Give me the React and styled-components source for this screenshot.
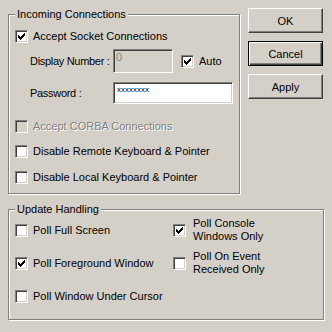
import React from 'react';
import styled, { createGlobalStyle } from 'styled-components';

const Global = createGlobalStyle`
  body {
    margin: 0;
    background: #d4d0c8;
    font-family: "Liberation Sans", Arial, sans-serif;
    font-size: 11px;
    color: #000;
  }
`;

const Dialog = styled.div`
  width: 332px;
  height: 332px;
  box-sizing: border-box;
  padding: 8px 0 0 8px;
  background: #d4d0c8;
`;

const TopRow = styled.div`
  display: flex;
  align-items: flex-start;
  gap: 8px;
`;

const Group = styled.fieldset`
  margin: ${({ $mt }) => $mt || 0}px 0 0 0;
  padding: 0 0 ${({ $pb }) => $pb}px 6px;
  width: ${({ $w }) => $w}px;
  min-inline-size: 0;
  box-sizing: border-box;
  border: 1px solid #808080;
  box-shadow: 1px 1px 0 #fff, inset 1px 1px 0 #fff;
`;

const Legend = styled.legend`
  padding: 0 2px;
  margin: 0;
  line-height: 13px;
  background: #d4d0c8;
`;

const Row = styled.div`
  display: flex;
  align-items: center;
  height: ${({ $h }) => $h}px;
  margin-top: ${({ $mt }) => $mt}px;
`;

const CheckLabel = styled.label`
  display: flex;
  align-items: center;
  gap: ${({ $gap }) => $gap || 5}px;
  margin-left: ${({ $ml }) => $ml || 0}px;
  line-height: 13px;
  color: ${({ $disabled }) => ($disabled ? '#808080' : '#000')};
  text-shadow: ${({ $disabled }) => ($disabled ? '1px 1px 0 #fff' : 'none')};
  white-space: nowrap;
`;

const Box = styled.span`
  flex: none;
  width: 13px;
  height: 13px;
  box-sizing: border-box;
  padding: 1px;
  border: 1px solid;
  border-color: #808080 #fff #fff #808080;
  box-shadow: inset 1px 1px 0 #404040, inset -1px -1px 0 #d4d0c8;
  background: ${({ $disabled }) => ($disabled ? '#d4d0c8' : '#fff')};
  display: flex;
`;

const FieldLabel = styled.span`
  flex: none;
  width: 83px;
  padding-left: 15px;
  white-space: nowrap;
  letter-spacing: -0.3px;
`;

const Edit = styled.div`
  flex: none;
  width: ${({ $w }) => $w}px;
  height: ${({ $h }) => $h}px;
  box-sizing: border-box;
  padding: ${({ $small }) => ($small ? '2px 3px' : '1px 2px')};
  border: 1px solid;
  border-color: #808080 #fff #fff #808080;
  box-shadow: inset 1px 1px 0 #404040, inset -1px -1px 0 #d4d0c8;
  background: ${({ $disabled }) => ($disabled ? '#d4d0c8' : '#fff')};
  color: ${({ $disabled }) => ($disabled ? '#808080' : '#000')};
  font-size: ${({ $small }) => ($small ? '8px' : '11px')};
  line-height: ${({ $small }) => ($small ? '9px' : '13px')};
`;

const Buttons = styled.div`
  display: flex;
  flex-direction: column;
  gap: 8px;
`;

const Button = styled.button`
  width: 75px;
  height: 25px;
  padding: 0;
  font: inherit;
  color: #000;
  background: #d4d0c8;
  border: 1px solid;
  border-color: ${({ $default }) => ($default ? '#000' : '#fff #404040 #404040 #fff')};
  box-shadow: ${({ $default }) =>
    $default
      ? 'inset 1px 1px 0 #fff, inset -1px -1px 0 #404040, inset -2px -2px 0 #808080'
      : 'inset -1px -1px 0 #808080'};
`;

const PollGrid = styled.div`
  display: grid;
  grid-template-columns: 158px 1fr;
  grid-template-rows: repeat(3, 26px);
  row-gap: 7px;
  padding-top: 1px;
  align-items: center;
`;

const Tick = () => (
  <svg width="9" height="9" viewBox="0 0 9 9" shapeRendering="crispEdges">
    {[[1, 3], [2, 4], [3, 5], [4, 4], [5, 3], [6, 2], [7, 1]].map(([x, y]) => (
      <rect key={x} x={x} y={y} width="1" height="3" fill="#000" />
    ))}
  </svg>
);

const Check = ({ checked, disabled, children, gap, ml }) => (
  <CheckLabel $disabled={disabled} $gap={gap} $ml={ml}>
    <Box $disabled={disabled}>{checked && <Tick />}</Box>
    <span>{children}</span>
  </CheckLabel>
);

export default function App() {
  return (
    <Dialog>
      <Global />
      <TopRow>
        <Group $w={232} $pb={9}>
          <Legend>Incoming Connections</Legend>
          <Row $h={14} $mt={8}>
            <Check checked>Accept Socket Connections</Check>
          </Row>
          <Row $h={24} $mt={6}>
            <FieldLabel>Display Number :</FieldLabel>
            <Edit $w={60} $h={24} $disabled>0</Edit>
            <Check checked ml={8}>Auto</Check>
          </Row>
          <Row $h={22} $mt={9}>
            <FieldLabel>Password :</FieldLabel>
            <Edit $w={120} $h={22} $small>xxxxxxxx</Edit>
          </Row>
          <Row $h={14} $mt={15}>
            <Check disabled>Accept CORBA Connections</Check>
          </Row>
          <Row $h={14} $mt={11}>
            <Check>Disable Remote Keyboard &amp; Pointer</Check>
          </Row>
          <Row $h={14} $mt={12}>
            <Check>Disable Local Keyboard &amp; Pointer</Check>
          </Row>
        </Group>
        <Buttons>
          <Button>OK</Button>
          <Button $default>Cancel</Button>
          <Button>Apply</Button>
        </Buttons>
      </TopRow>
      <Group $w={316} $pb={10} $mt={9}>
        <Legend>Update Handling</Legend>
        <PollGrid>
          <Check>Poll Full Screen</Check>
          <Check checked gap={7}>Poll Console<br />Windows Only</Check>
          <Check checked>Poll Foreground Window</Check>
          <Check gap={7}>Poll On Event<br />Received Only</Check>
          <Check>Poll Window Under Cursor</Check>
        </PollGrid>
      </Group>
    </Dialog>
  );
}
